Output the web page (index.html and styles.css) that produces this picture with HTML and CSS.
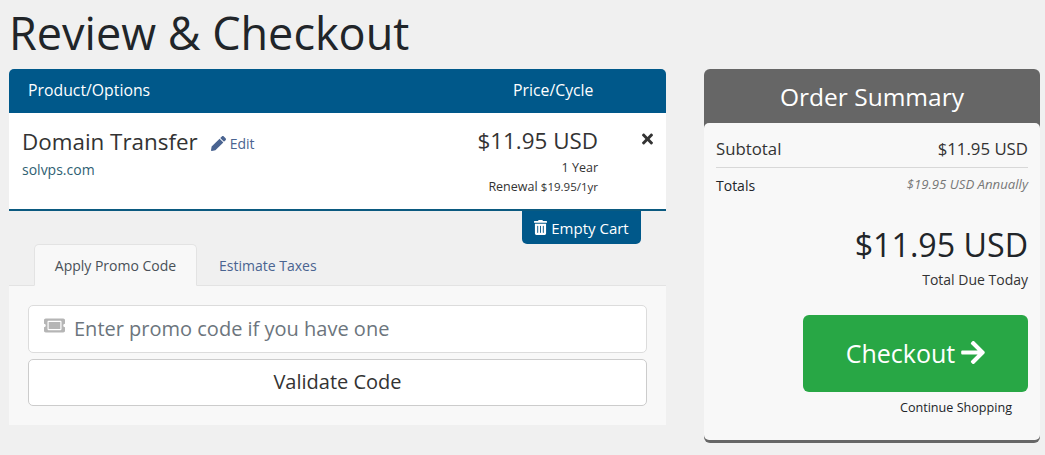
FILE: index.html
```html
<!DOCTYPE html>
<html lang="en">
<head>
    <meta charset="UTF-8">
    <meta name="viewport" content="width=device-width, initial-scale=1.0">
    <title>Review &amp; Checkout</title>
    <link rel="stylesheet" href="styles.css">
</head>
<body>

<h1 class="page-title">Review &amp; Checkout</h1>

<div class="checkout">
    <div class="cart-col">
        <div class="cart-head">
            <span class="head-product">Product/Options</span>
            <span class="head-price">Price/Cycle</span>
        </div>

        <div class="cart-item">
            <div class="item-info">
                <div class="item-title">
                    <span class="item-name">Domain Transfer</span>
                    <a class="item-edit" href="#">
                        <svg class="icon-edit" viewBox="0 0 512 512"><path d="M497.9 142.1l-46.1 46.1c-4.7 4.7-12.3 4.7-17 0l-111-111c-4.7-4.7-4.7-12.3 0-17l46.1-46.1c18.7-18.7 49.1-18.7 67.9 0l60.1 60.1c18.8 18.7 18.8 49.1 0 67.9zM284.2 99.8L21.6 362.4.4 483.9c-2.9 16.4 11.4 30.6 27.8 27.8l121.5-21.3 262.6-262.6c4.7-4.7 4.7-12.3 0-17l-111-111c-4.8-4.7-12.4-4.7-17.1 0z"/></svg>
                        Edit
                    </a>
                </div>
                <div class="item-domain">solvps.com</div>
            </div>
            <div class="item-price">
                <div class="price-main">$11.95 USD</div>
                <div class="price-cycle">1 Year</div>
                <div class="price-renew">Renewal <span class="renew-value">$19.95/1yr</span></div>
            </div>
            <div class="item-remove">
                <svg class="icon-times" viewBox="0 0 352 512"><path d="M242.72 256l100.07-100.07c12.28-12.28 12.28-32.19 0-44.48l-22.24-22.24c-12.28-12.28-32.19-12.28-44.48 0L176 189.28 75.93 89.21c-12.28-12.28-32.19-12.28-44.48 0L9.21 111.45c-12.28 12.28-12.28 32.19 0 44.48L109.28 256 9.21 356.07c-12.28 12.28-12.28 32.19 0 44.48l22.24 22.24c12.28 12.28 32.2 12.28 44.48 0L176 322.72l100.07 100.07c12.28 12.28 32.2 12.28 44.48 0l22.24-22.24c12.28-12.28 12.28-32.19 0-44.48L242.72 256z"/></svg>
            </div>
        </div>

        <div class="cart-actions">
            <button class="btn-empty">
                <svg class="icon-trash" viewBox="0 0 448 512"><path d="M32 464a48 48 0 0 0 48 48h288a48 48 0 0 0 48-48V128H32zm272-256a16 16 0 0 1 32 0v224a16 16 0 0 1-32 0zm-96 0a16 16 0 0 1 32 0v224a16 16 0 0 1-32 0zm-96 0a16 16 0 0 1 32 0v224a16 16 0 0 1-32 0zM432 32H312l-9.4-18.7A24 24 0 0 0 281.1 0H166.8a23.72 23.72 0 0 0-21.4 13.3L136 32H16A16 16 0 0 0 0 48v32a16 16 0 0 0 16 16h416a16 16 0 0 0 16-16V48a16 16 0 0 0-16-16z"/></svg>
                Empty Cart
            </button>
        </div>

        <div class="tabs">
            <a class="tab tab-active" href="#">Apply Promo Code</a>
            <a class="tab" href="#">Estimate Taxes</a>
        </div>

        <div class="tab-panel">
            <div class="promo-field">
                <svg class="icon-ticket" viewBox="0 0 576 512"><path d="M128 160h320v192H128V160zm400 96c0 26.51 21.49 48 48 48v96c0 26.51-21.49 48-48 48H48c-26.51 0-48-21.49-48-48v-96c26.51 0 48-21.49 48-48s-21.49-48-48-48v-96c0-26.51 21.49-48 48-48h480c26.51 0 48 21.49 48 48v96c-26.51 0-48 21.49-48 48zm-48-104c0-13.255-10.745-24-24-24H120c-13.255 0-24 10.745-24 24v208c0 13.255 10.745 24 24 24h336c13.255 0 24-10.745 24-24V152z"/></svg>
                <input class="promo-input" type="text" placeholder="Enter promo code if you have one">
            </div>
            <button class="btn-validate">Validate Code</button>
        </div>
    </div>

    <div class="summary">
        <div class="summary-head">Order Summary</div>
        <div class="summary-body">
            <div class="summary-row subtotal">
                <span>Subtotal</span>
                <span>$11.95 USD</span>
            </div>
            <div class="summary-row totals">
                <span>Totals</span>
                <span class="recurring">$19.95 USD Annually</span>
            </div>
            <div class="total-due">$11.95 USD</div>
            <div class="total-label">Total Due Today</div>
            <div class="checkout-wrap">
                <button class="btn-checkout">
                    Checkout
                    <svg class="icon-arrow" viewBox="0 0 448 512"><path d="M190.5 66.9l22.2-22.2c9.4-9.4 24.6-9.4 33.9 0L441 239c9.4 9.4 9.4 24.6 0 33.9L246.6 467.3c-9.4 9.4-24.6 9.4-33.9 0l-22.2-22.2c-9.5-9.5-9.3-25 .4-34.3L311.4 296H24c-13.3 0-24-10.7-24-24v-32c0-13.3 10.7-24 24-24h287.4L190.9 101.2c-9.8-9.3-10-24.8-.4-34.3z"/></svg>
                </button>
            </div>
            <div class="continue-wrap"><a class="continue" href="#">Continue Shopping</a></div>
        </div>
    </div>
</div>

</body>
</html>
```

FILE: styles.css
```css
* {
    box-sizing: border-box;
}

body {
    font-family: "Open Sans", sans-serif;
    background-color: #f0f0f0;
    margin: 0;
    padding: 0 5px 0 9px;
    color: #212529;
    font-size: 14px;
    overflow: hidden;
}

a {
    text-decoration: none;
}

.page-title {
    margin: 0;
    height: 69px;
    font-size: 45px;
    font-weight: 400;
    line-height: 65px;
}

.checkout {
    display: flex;
    justify-content: space-between;
    align-items: flex-start;
}

.cart-col {
    width: 657px;
}

.cart-head {
    display: flex;
    height: 44px;
    padding-bottom: 2px;
    align-items: center;
    background-color: #00588a;
    color: #fff;
    font-size: 15.8px;
    border-radius: 5px 5px 0 0;
}

.head-product {
    padding-left: 19px;
    width: 504px;
}

.cart-item {
    display: flex;
    height: 98px;
    background-color: #fff;
    border-bottom: 2px solid #0b5a80;
}

.item-info {
    width: 388px;
    padding: 12px 0 0 13px;
}

.item-title {
    display: flex;
    align-items: center;
    height: 32px;
}

.item-name {
    font-size: 22.4px;
    color: #333;
}

.item-edit {
    margin-left: 13px;
    color: #4a6491;
    display: flex;
    align-items: center;
    gap: 4px;
    padding-top: 5px;
}

.icon-edit {
    width: 15px;
    height: 15px;
    fill: #4a6491;
}

.item-domain {
    margin-top: 3px;
    color: #2f5f73;
    line-height: 20px;
}

.item-price {
    width: 201px;
    padding-top: 12px;
    text-align: right;
}

.price-main {
    font-size: 22.4px;
    line-height: 32px;
    color: #333;
}

.price-cycle {
    font-size: 12.5px;
    line-height: 17px;
    margin-top: 2px;
    color: #333;
}

.price-renew {
    font-size: 12.5px;
    line-height: 17px;
    margin-top: 2px;
    color: #333;
}

.renew-value {
    font-size: 11.5px;
}

.item-remove {
    padding: 18px 0 0 44px;
}

.icon-times {
    display: block;
    width: 11px;
    height: 16px;
    fill: #333;
}

.cart-actions {
    display: flex;
    justify-content: flex-end;
    height: 33px;
    padding-right: 25px;
}

.btn-empty {
    display: flex;
    align-items: center;
    justify-content: center;
    gap: 4px;
    width: 119px;
    height: 33px;
    padding: 0;
    border: none;
    border-radius: 0 0 5px 5px;
    background-color: #00588a;
    color: #fff;
    font-family: inherit;
    font-size: 15px;
}

.icon-trash {
    width: 13px;
    height: 15px;
    fill: #fff;
}

.tabs {
    display: flex;
    height: 42px;
    padding-left: 25px;
    border-bottom: 1px solid #e3e3e3;
    font-size: 14px;
    white-space: nowrap;
}

.tab {
    display: flex;
    align-items: center;
    justify-content: center;
    height: 42px;
    padding: 0 21px;
    color: #4a6491;
    border: 1px solid transparent;
}

.tab-active {
    width: 163px;
    padding: 0;
    color: #495057;
    background-color: #f8f8f8;
    border-color: #e3e3e3 #e3e3e3 #f8f8f8;
    border-radius: 5px 5px 0 0;
}

.tab-panel {
    height: 139px;
    padding: 19px 19px 0;
    background-color: #f8f8f8;
}

.promo-field {
    position: relative;
}

.icon-ticket {
    position: absolute;
    left: 16px;
    top: 11px;
    width: 21px;
    height: 19px;
    fill: #b5b5b5;
}

.promo-input {
    display: block;
    width: 100%;
    height: 48px;
    padding: 0 15px 2px 45px;
    border: 1px solid #dcdcdc;
    border-radius: 5px;
    background-color: #fff;
    font-family: inherit;
    font-size: 20px;
    outline: none;
}

.promo-input::placeholder {
    color: #6c757d;
    opacity: 1;
}

.btn-validate {
    display: block;
    width: 100%;
    height: 47px;
    margin-top: 6px;
    padding: 0 0 2px;
    border: 1px solid #ccc;
    border-radius: 5px;
    background-color: #fff;
    color: #333;
    font-family: inherit;
    font-size: 20px;
}

.summary {
    width: 336px;
    height: 374px;
    background-color: #666;
    border-radius: 6px;
    padding-bottom: 3px;
}

.summary-head {
    height: 54px;
    text-align: center;
    color: #fff;
    font-size: 24.5px;
    line-height: 56px;
}

.summary-body {
    height: 317px;
    padding: 0 12px;
    background-color: #f8f8f8;
    border-radius: 5px;
}

.summary-row {
    display: flex;
    justify-content: space-between;
}

.subtotal {
    height: 45px;
    padding-top: 14px;
    font-size: 16.8px;
    line-height: 24px;
    border-bottom: 1px solid #d8d8d8;
    color: #333;
}

.totals {
    padding-top: 8px;
    line-height: 20px;
}

.recurring {
    font-size: 13.2px;
    font-style: italic;
    line-height: 16px;
    color: #777;
}

.total-due {
    margin-top: 27px;
    text-align: right;
    font-size: 32.2px;
    line-height: 44px;
    color: #212529;
}

.total-label {
    margin-top: 3px;
    text-align: right;
    line-height: 20px;
    color: #333;
}

.checkout-wrap {
    display: flex;
    justify-content: flex-end;
    margin-top: 25px;
}

.btn-checkout {
    display: flex;
    align-items: center;
    justify-content: center;
    gap: 6px;
    width: 225px;
    height: 77px;
    padding: 0 0 2px;
    border: none;
    border-radius: 6px;
    background-color: #28a745;
    color: #fff;
    font-family: inherit;
    font-size: 25px;
}

.icon-arrow {
    width: 24px;
    height: 27px;
    fill: #fff;
}

.continue-wrap {
    margin-top: 6px;
    padding-right: 16px;
    text-align: right;
    font-size: 12.6px;
    line-height: 20px;
}

.continue {
    color: #212529;
}
```
